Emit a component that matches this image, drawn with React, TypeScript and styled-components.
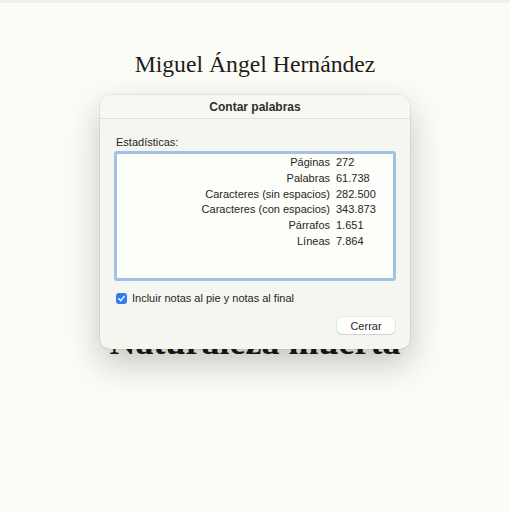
import React from "react";
import styled, { createGlobalStyle } from "styled-components";

const Global = createGlobalStyle`
  html, body { margin: 0; padding: 0; background: #fdfdf7; }
  body { width: 510px; height: 512px; overflow: hidden; }
`;

const Page = styled.div`
  position: relative;
  width: 510px;
  height: 512px;
  background: #fdfdf7;
`;

const TopStrip = styled.div`
  height: 3px;
  background: #f1f1ec;
`;

const Document = styled.div`
  height: 400px;
  background: #fcfcf6;
  display: flex;
  flex-direction: column;
  align-items: center;
  padding-top: 46px;
  box-sizing: border-box;
`;

const Author = styled.div`
  font-family: "Liberation Serif", "DejaVu Serif", serif;
  font-size: 23.7px;
  line-height: 30px;
  color: #1c1c1a;
`;

const BookTitle = styled.div`
  margin-top: 243px;
  font-family: "Liberation Serif", "DejaVu Serif", serif;
  font-weight: bold;
  font-size: 36px;
  line-height: 40px;
  color: #1a1a18;
`;

const Dialog = styled.div`
  position: absolute;
  left: 100px;
  top: 95px;
  width: 310px;
  height: 254px;
  background: #f6f6f1;
  border-radius: 10px;
  box-shadow: 0 0 0 0.5px rgba(0, 0, 0, 0.12), 0 14px 34px rgba(0, 0, 0, 0.22);
  font-family: "Liberation Sans", Arial, sans-serif;
  color: #262624;
  display: flex;
  flex-direction: column;
  overflow: hidden;
`;

const TitleBar = styled.div`
  height: 23px;
  display: flex;
  align-items: center;
  justify-content: center;
  font-size: 12px;
  font-weight: bold;
  color: #2e2e2c;
  border-bottom: 1px solid #e2e2dc;
  background: #f8f8f3;
`;

const Body = styled.div`
  display: flex;
  flex-direction: column;
  padding: 16px 14px 0 14px;
`;

const SectionLabel = styled.div`
  font-size: 11px;
  line-height: 14px;
  padding-left: 2px;
  margin-bottom: 2px;
`;

const StatsBox = styled.div`
  height: 123px;
  background: #fdfdf9;
  border: 3px solid #a2c0e8;
  border-radius: 3px;
  display: grid;
  grid-template-columns: 213px 1fr;
  column-gap: 6px;
  align-content: start;
  padding-top: 1px;
  font-size: 11px;
  line-height: 15.8px;
`;

const StatLabel = styled.div`
  text-align: right;
`;

const StatValue = styled.div`
  text-align: left;
`;

const CheckRow = styled.label`
  display: flex;
  align-items: center;
  gap: 5px;
  margin-top: 11px;
  padding-left: 2px;
  font-size: 11px;
`;

const CheckBox = styled.span`
  width: 11px;
  height: 11px;
  border-radius: 3px;
  background: #2f7bf0;
  display: flex;
  align-items: center;
  justify-content: center;
`;

const Footer = styled.div`
  display: flex;
  justify-content: flex-end;
  margin-top: 13px;
`;

const Button = styled.button`
  width: 58px;
  height: 17px;
  border: none;
  border-radius: 5px;
  background: #ffffff;
  box-shadow: 0 0 0 0.5px rgba(0, 0, 0, 0.12), 0 1px 1px rgba(0, 0, 0, 0.1);
  font-family: "Liberation Sans", Arial, sans-serif;
  font-size: 11px;
  color: #262624;
  padding: 0;
  margin-right: 1px;
`;

const stats: [string, string][] = [
  ["Páginas", "272"],
  ["Palabras", "61.738"],
  ["Caracteres (sin espacios)", "282.500"],
  ["Caracteres (con espacios)", "343.873"],
  ["Párrafos", "1.651"],
  ["Líneas", "7.864"],
];

export default function App() {
  return (
    <Page>
      <Global />
      <TopStrip />
      <Document>
        <Author>Miguel Ángel Hernández</Author>
        <BookTitle>Naturaleza muerta</BookTitle>
      </Document>
      <Dialog>
        <TitleBar>Contar palabras</TitleBar>
        <Body>
          <SectionLabel>Estadísticas:</SectionLabel>
          <StatsBox>
            {stats.map(([k, v]) => (
              <React.Fragment key={k}>
                <StatLabel>{k}</StatLabel>
                <StatValue>{v}</StatValue>
              </React.Fragment>
            ))}
          </StatsBox>
          <CheckRow>
            <CheckBox>
              <svg width="9" height="9" viewBox="0 0 10 10">
                <path d="M2 5.2 L4.2 7.4 L8 2.6" fill="none" stroke="#fff" strokeWidth="1.6" strokeLinecap="round" strokeLinejoin="round" />
              </svg>
            </CheckBox>
            Incluir notas al pie y notas al final
          </CheckRow>
          <Footer>
            <Button>Cerrar</Button>
          </Footer>
        </Body>
      </Dialog>
    </Page>
  );
}
